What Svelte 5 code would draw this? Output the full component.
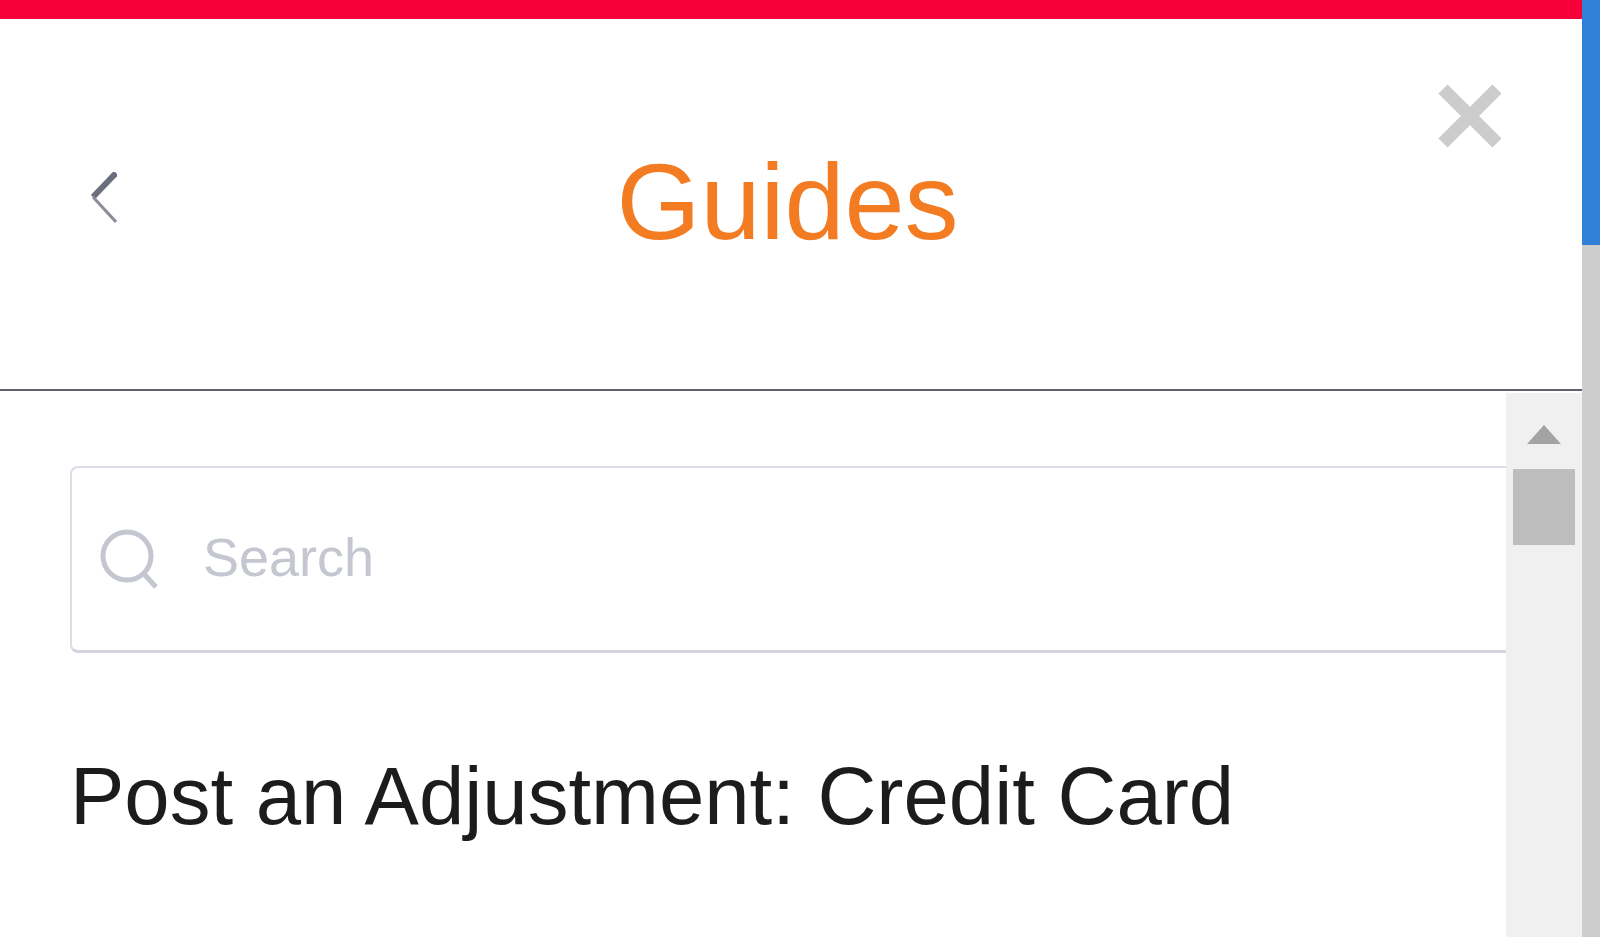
<script lang="ts">
	const guides = ['Post an Adjustment: Credit Card'];
</script>

<div class="page">
	<div class="panel">
		<div class="topbar"></div>
		<header class="head">
			<button class="back" aria-label="Back">
				<svg width="27" height="51" viewBox="0 0 27 51">
					<path d="M26 1 L3 25" fill="none" stroke="#6b6f7c" stroke-width="6" />
					<path d="M3 25 L26 50" fill="none" stroke="#8a8d98" stroke-width="3" />
				</svg>
			</button>
			<h1>Guides</h1>
			<button class="close" aria-label="Close">
				<svg width="64" height="64" viewBox="0 0 64 64">
					<path d="M5 5 L59 59 M59 5 L5 59" fill="none" stroke="#cccccc" stroke-width="13" />
				</svg>
			</button>
		</header>
		<div class="body">
			<div class="content">
				<label class="search">
					<svg width="58" height="60" viewBox="0 0 58 60">
						<circle cx="27" cy="27" r="24" fill="none" stroke="#c4c6d0" stroke-width="5" />
						<path d="M44 45 L56 58" fill="none" stroke="#c4c6d0" stroke-width="5" />
					</svg>
					<input type="text" placeholder="Search" />
				</label>
				<ul>
					{#each guides as guide}
						<li>{guide}</li>
					{/each}
				</ul>
			</div>
			<div class="track">
				<div class="arrow"></div>
				<div class="thumb"></div>
			</div>
		</div>
	</div>
	<div class="rail">
		<div class="rail-thumb"></div>
	</div>
</div>

<style>
	:global(body) {
		margin: 0;
		overflow: hidden;
		background: #fff;
		font-family: 'Liberation Sans', Arial, sans-serif;
	}
	.page {
		display: flex;
		height: 937px;
	}
	.panel {
		flex: 1;
		min-width: 0;
		display: flex;
		flex-direction: column;
	}
	.topbar {
		height: 19px;
		background: #f6003a;
	}
	.head {
		height: 372px;
		flex: none;
		box-sizing: border-box;
		border-bottom: 2px solid #5f6068;
		position: relative;
		display: flex;
		justify-content: center;
		padding-top: 122px;
	}
	h1 {
		margin: 0 0 0 -7px;
		font-size: 108px;
		font-weight: 400;
		line-height: 122px;
		color: #f37b22;
	}
	button {
		position: absolute;
		padding: 0;
		border: none;
		background: none;
		line-height: 0;
	}
	.back {
		left: 90px;
		top: 153px;
	}
	.close {
		left: 1438px;
		top: 65px;
	}
	.body {
		flex: 1;
		min-height: 0;
		display: flex;
	}
	.content {
		flex: 1;
		min-width: 0;
		padding: 75px 0 0 70px;
	}
	.search {
		display: flex;
		align-items: center;
		gap: 45px;
		height: 187px;
		box-sizing: border-box;
		padding: 0 0 0 28px;
		border: 2px solid #dcdde6;
		border-right: none;
		border-bottom: 3px solid #d3d4de;
		border-radius: 8px 0 0 8px;
	}
	input {
		flex: 1;
		min-width: 0;
		padding: 0 0 4px;
		border: none;
		outline: none;
		font: 54px 'Liberation Sans', Arial, sans-serif;
		color: #222;
	}
	input::placeholder {
		color: #c4c6d0;
		opacity: 1;
	}
	ul {
		list-style: none;
		margin: 98px 0 0;
		padding: 0;
	}
	li {
		font-size: 81.5px;
		line-height: 90px;
		color: #1c1c1c;
	}
	.track {
		width: 76px;
		flex: none;
		margin-top: 2px;
		background: #f0f0f0;
		display: flex;
		flex-direction: column;
		align-items: center;
		padding-top: 32px;
	}
	.arrow {
		width: 0;
		height: 0;
		border-left: 17px solid transparent;
		border-right: 17px solid transparent;
		border-bottom: 19px solid #a3a3a3;
	}
	.thumb {
		width: 62px;
		height: 76px;
		margin-top: 25px;
		background: #bebebe;
	}
	.rail {
		width: 18px;
		flex: none;
		background: #cdcdcd;
	}
	.rail-thumb {
		height: 245px;
		background: #3080d8;
	}
</style>
